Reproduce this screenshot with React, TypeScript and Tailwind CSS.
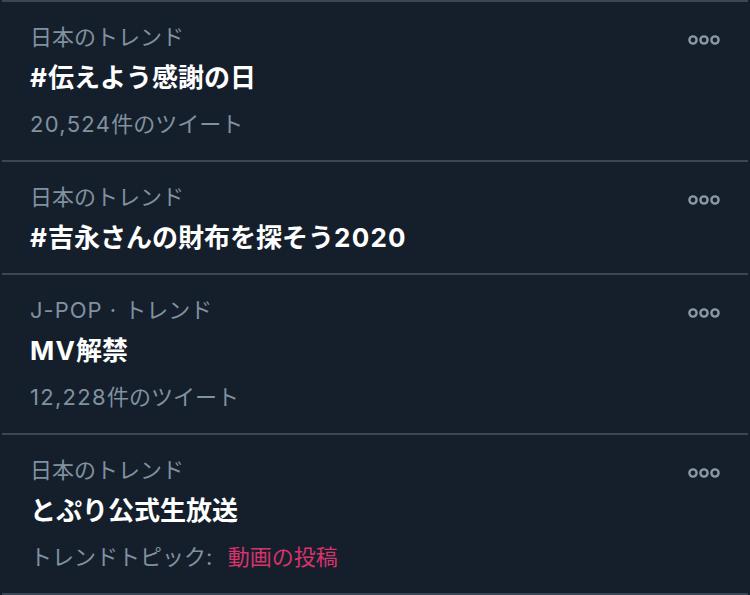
import React from "react";

interface Trend {
  meta: string;
  title: string;
  count?: string;
  topic?: string;
}

const trends: Trend[] = [
  { meta: "日本のトレンド", title: "#伝えよう感謝の日", count: "20,524件のツイート" },
  { meta: "日本のトレンド", title: "#吉永さんの財布を探そう2020" },
  { meta: "J-POP · トレンド", title: "MV解禁", count: "12,228件のツイート" },
  { meta: "日本のトレンド", title: "とぷり公式生放送", topic: "動画の投稿" },
];

// latin runs render a little wider in the original font
function Spaced({ text, track }: { text: string; track: string }) {
  const parts = text.split(/([\x20-\x7E·]+)/);
  return (
    <>
      {parts.map((p, i) =>
        /[\x20-\x7E·]/.test(p) ? (
          <span key={i} className={track}>
            {p}
          </span>
        ) : (
          <React.Fragment key={i}>{p}</React.Fragment>
        )
      )}
    </>
  );
}

function MoreIcon() {
  return (
    <svg width="32" height="12" viewBox="0 0 32 12" className="text-[#8b98a5]">
      <circle cx="5" cy="6" r="3.6" fill="none" stroke="currentColor" strokeWidth="2.4" />
      <circle cx="16" cy="6" r="3.6" fill="none" stroke="currentColor" strokeWidth="2.4" />
      <circle cx="27" cy="6" r="3.6" fill="none" stroke="currentColor" strokeWidth="2.4" />
    </svg>
  );
}

export default function App() {
  return (
    <div
      className="w-[750px] h-[595px] bg-[#151f2b] overflow-hidden"
      style={{ fontFamily: 'Inter, "Noto Sans CJK JP", sans-serif' }}
    >
      <div className="mx-[2px] h-[2px] bg-[#3a4654]" />
      {trends.map((t, i) => (
        <div key={i}>
          <div className="flex justify-between pl-[30px] pr-[30px] pt-[21px] pb-[19px]">
            <div>
              <div className="text-[22px] leading-[28px] text-[#8091a0]">
                <Spaced text={t.meta} track="tracking-[1px]" />
              </div>
              <div className="mt-[11px] text-[26px] leading-[32px] font-bold text-white">
                <Spaced text={t.title} track="tracking-[1.2px]" />
              </div>
              {t.count && (
                <div className="mt-[13px] text-[22px] leading-[34px] text-[#8091a0]">
                  <Spaced text={t.count} track="tracking-[1.3px]" />
                </div>
              )}
              {t.topic && (
                <div className="mt-[13px] text-[22px] leading-[34px] text-[#8091a0]">
                  トレンドトピック:&nbsp;&nbsp;
                  <span className="ml-[3px] text-[#d6336c]">{t.topic}</span>
                </div>
              )}
            </div>
            <div className="pt-[11px]">
              <MoreIcon />
            </div>
          </div>
          <div className="mx-[2px] h-[2px] bg-[#3a4654]" />
        </div>
      ))}
    </div>
  );
}
